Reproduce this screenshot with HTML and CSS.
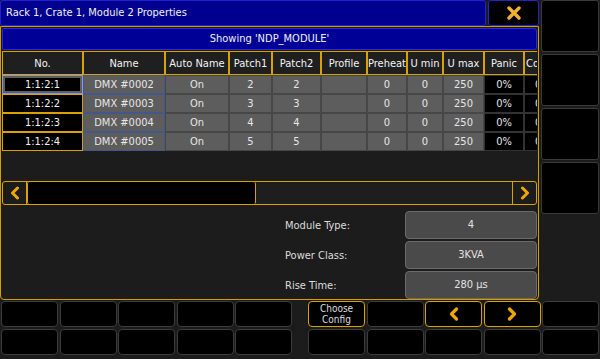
FILE: index.html
```html
<!DOCTYPE html>
<html lang="en">
<head>
  <meta charset="UTF-8">
  <title>Rack 1, Crate 1, Module 2 Properties</title>
  <link rel="stylesheet" href="styles.css">
</head>
<body>
  <div class="screen">
    <div class="window">
      <div class="titlebar">
        <div class="title">Rack 1, Crate 1, Module 2 Properties</div>
        <div class="close">
          <svg width="16" height="16" viewBox="0 0 16 16"><path d="M3 3 L13 13 M13 3 L3 13" stroke="#f5b030" stroke-width="3.4" stroke-linecap="round" fill="none"/></svg>
        </div>
      </div>
      <div class="panel">
        <div class="showing">Showing 'NDP_MODULE'</div>
        <div class="sheet-wrap">
          <table class="sheet">
            <colgroup>
              <col style="width:81px"><col style="width:82px"><col style="width:64px"><col style="width:43px">
              <col style="width:49px"><col style="width:46px"><col style="width:40px"><col style="width:36px">
              <col style="width:41px"><col style="width:40px"><col style="width:40px">
            </colgroup>
            <thead>
              <tr>
                <th>No.</th><th>Name</th><th>Auto Name</th><th>Patch1</th><th>Patch2</th><th>Profile</th>
                <th>Preheat</th><th>U min</th><th>U max</th><th>Panic</th><th class="co">Co</th>
              </tr>
            </thead>
            <tbody>
              <tr>
                <td class="no sel">1:1:2:1</td><td class="nm">DMX #0002</td><td class="g">On</td><td class="g">2</td><td class="g">2</td><td class="g"></td>
                <td class="g">0</td><td class="g">0</td><td class="g">250</td><td class="pn">0%</td><td class="pn co">0</td>
              </tr>
              <tr>
                <td class="no">1:1:2:2</td><td class="nm">DMX #0003</td><td class="g">On</td><td class="g">3</td><td class="g">3</td><td class="g"></td>
                <td class="g">0</td><td class="g">0</td><td class="g">250</td><td class="pn">0%</td><td class="pn co">0</td>
              </tr>
              <tr>
                <td class="no">1:1:2:3</td><td class="nm">DMX #0004</td><td class="g">On</td><td class="g">4</td><td class="g">4</td><td class="g"></td>
                <td class="g">0</td><td class="g">0</td><td class="g">250</td><td class="pn">0%</td><td class="pn co">0</td>
              </tr>
              <tr>
                <td class="no">1:1:2:4</td><td class="nm">DMX #0005</td><td class="g">On</td><td class="g">5</td><td class="g">5</td><td class="g"></td>
                <td class="g">0</td><td class="g">0</td><td class="g">250</td><td class="pn">0%</td><td class="pn co">0</td>
              </tr>
            </tbody>
          </table>
        </div>
        <div class="spacer"></div>
        <div class="scroll">
          <div class="sbtn">
            <svg width="10" height="14" viewBox="0 0 10 14"><path d="M7.5 2 L2.5 7 L7.5 12" stroke="#f0a800" stroke-width="3" fill="none" stroke-linejoin="round" stroke-linecap="round"/></svg>
          </div>
          <div class="thumb"></div>
          <div class="track"></div>
          <div class="sbtn right">
            <svg width="10" height="14" viewBox="0 0 10 14"><path d="M2.5 2 L7.5 7 L2.5 12" stroke="#f0a800" stroke-width="3" fill="none" stroke-linejoin="round" stroke-linecap="round"/></svg>
          </div>
        </div>
        <div class="props">
          <div class="prop"><span class="plabel">Module Type:</span><span class="pval">4</span></div>
          <div class="prop"><span class="plabel">Power Class:</span><span class="pval">3KVA</span></div>
          <div class="prop"><span class="plabel">Rise Time:</span><span class="pval">280 µs</span></div>
        </div>
      </div>
    </div>

    <div class="side">
      <div class="tile"></div>
      <div class="tile"></div>
      <div class="tile"></div>
      <div class="tile"></div>
    </div>

    <div class="keys">
      <div class="keygroup">
        <div class="key"></div><div class="key"></div><div class="key"></div><div class="key"></div><div class="key"></div>
        <div class="key"></div><div class="key"></div><div class="key"></div><div class="key"></div><div class="key"></div>
      </div>
      <div class="keygroup">
        <div class="key on">Choose<br>Config</div>
        <div class="key"></div>
        <div class="key on">
          <svg width="12" height="16" viewBox="0 0 12 16"><path d="M8.5 3 L3.5 8 L8.5 13" stroke="#f0a800" stroke-width="3.2" fill="none" stroke-linejoin="round" stroke-linecap="round"/></svg>
        </div>
        <div class="key on">
          <svg width="12" height="16" viewBox="0 0 12 16"><path d="M3.5 3 L8.5 8 L3.5 13" stroke="#f0a800" stroke-width="3.2" fill="none" stroke-linejoin="round" stroke-linecap="round"/></svg>
        </div>
        <div class="key"></div>
        <div class="key"></div><div class="key"></div><div class="key"></div><div class="key"></div><div class="key"></div>
      </div>
    </div>
  </div>
</body>
</html>
```

FILE: styles.css
```css
* { box-sizing: border-box; }
body {
  margin: 0;
  background-color: #1c1c1c;
  font-family: "DejaVu Sans Condensed", "Liberation Sans", sans-serif;
  font-size: 11px;
  color: #ececec;
}
.screen {
  width: 600px;
  height: 359px;
  overflow: hidden;
  display: grid;
  grid-template-columns: 540px 60px;
  grid-template-rows: 300px 59px;
}
.window {
  display: flex;
  flex-direction: column;
  width: 539px;
}
.titlebar {
  display: flex;
  gap: 2px;
  height: 26px;
}
.title {
  width: 486px;
  background-color: #00008e;
  border: 1px solid #2323c8;
  border-radius: 3px;
  padding-left: 5px;
  line-height: 24px;
  font-size: 11px;
  color: #f2f2f2;
}
.close {
  width: 51px;
  background-color: #000;
  border: 1px solid #2323c8;
  border-radius: 3px;
  display: flex;
  align-items: center;
  justify-content: center;
}
.panel {
  height: 274px;
  border: 1px solid #d49c00;
  border-radius: 0 0 4px 4px;
  padding: 1px 1px 0 1px;
  display: flex;
  flex-direction: column;
}
.showing {
  height: 22px;
  background-color: #000096;
  border: 1px solid #2a2ae6;
  border-radius: 2px 3px 3px 2px;
  text-align: center;
  line-height: 20px;
  color: #f2f2f2;
}
.sheet-wrap {
  margin-top: 1px;
  width: 535px;
  overflow: hidden;
}
.sheet {
  border-collapse: separate;
  border-spacing: 0;
  table-layout: fixed;
  width: 562px;
}
.sheet th, .sheet td {
  padding: 0;
  text-align: center;
  white-space: nowrap;
  overflow: hidden;
  font-weight: normal;
}
.sheet th {
  height: 24px;
  background-color: #1f1f1f;
  border: 1px solid #d9a200;
  color: #f4f4f4;
}
.sheet td {
  height: 19px;
  color: #e6e6e6;
}
.sheet td.no {
  background-color: #000;
  border: 1px solid #d9a200;
  color: #f4f4f4;
}
.sheet td.sel {
  border-color: #8a96e6;
  box-shadow: inset 0 0 0 2px #5e5e5e;
}
.sheet td.nm {
  background-color: #5d5d5d;
  border: 1px solid #44568e;
}
.sheet td.g {
  background-color: #5d5d5d;
  border: 1px solid #474747;
}
.sheet td.pn {
  background-color: #000;
  border: 1px solid #333;
}
.sheet th.co {
  text-align: left;
  padding-left: 1px;
}
.sheet td.co {
  text-align: left;
  padding-left: 10px;
}
.spacer { flex: 1; }
.scroll {
  height: 24px;
  display: flex;
  border: 1px solid #d9a200;
  border-radius: 3px;
}
.sbtn {
  width: 24px;
  display: flex;
  align-items: center;
  justify-content: center;
  border-right: 1px solid #d9a200;
}
.sbtn.right {
  border-right: none;
  border-left: 1px solid #d9a200;
}
.thumb {
  width: 229px;
  background-color: #000;
  border-left: 1px solid #d9a200;
  border-right: 1px solid #d9a200;
  border-radius: 2px;
}
.track {
  flex: 1;
  background-color: #1e1e1e;
}
.props {
  margin-top: 6px;
  display: flex;
  flex-direction: column;
  gap: 2px;
}
.prop {
  display: flex;
  justify-content: flex-end;
  align-items: center;
  height: 28px;
}
.plabel {
  width: 120px;
  color: #dcdcdc;
}
.pval {
  width: 132px;
  height: 28px;
  background-color: #4a4a4a;
  border: 1px solid #6b6b6b;
  border-radius: 4px;
  text-align: center;
  line-height: 26px;
  color: #e2e2e2;
}
.side {
  padding-left: 1px;
  display: flex;
  flex-direction: column;
  gap: 2px;
}
.tile {
  width: 58px;
  height: 52px;
  background-color: #000;
  border: 1px solid #3a3a3a;
  border-radius: 3px;
}
.keys {
  grid-column: 1 / 3;
  display: flex;
  justify-content: space-between;
  padding: 1px 1px 0 1px;
}
.keygroup {
  width: 291px;
  display: grid;
  grid-template-columns: repeat(5, 1fr);
  grid-template-rows: 26px 26px;
  gap: 2px 1.5px;
}
.key {
  background-color: #000;
  border: 1px solid #3c3c3c;
  border-radius: 4px;
  display: flex;
  align-items: center;
  justify-content: center;
  text-align: center;
  font-size: 10px;
  line-height: 11px;
  color: #dedede;
}
.key.on { border-color: #d9a200; }
```
